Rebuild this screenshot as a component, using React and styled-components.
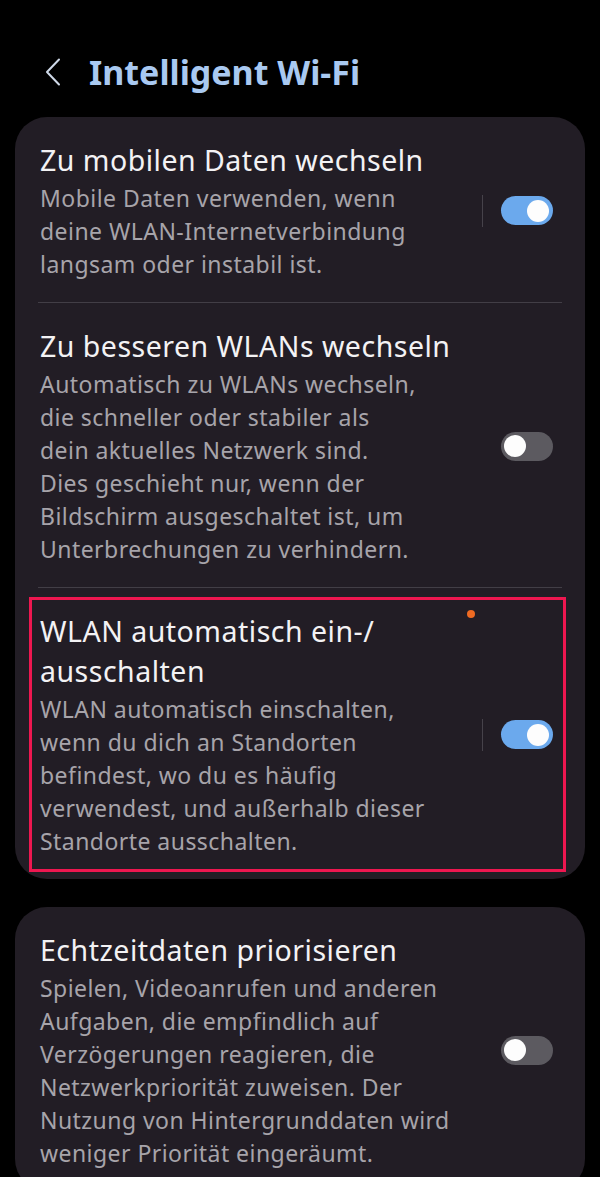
import React from 'react';
import styled, { createGlobalStyle } from 'styled-components';

const Global = createGlobalStyle`
  html, body {
    margin: 0;
    padding: 0;
    background: #000;
  }
  body {
    font-family: "Noto Sans", Roboto, sans-serif;
    -webkit-font-smoothing: antialiased;
  }
`;

const Page = styled.div`
  width: 600px;
  min-height: 1177px;
  background: #000;
  padding: 0 15px;
  box-sizing: border-box;
  overflow: hidden;
`;

const Header = styled.div`
  display: flex;
  align-items: center;
  height: 44px;
  padding-top: 50px;
  margin-bottom: 23px;
`;

const Back = styled.button`
  display: flex;
  align-items: center;
  justify-content: center;
  width: 24px;
  height: 44px;
  margin-left: 26px;
  margin-right: 24px;
  padding: 0;
  background: none;
  border: 0;
`;

const Title = styled.h1`
  margin: 0;
  font-size: 34px;
  font-weight: 700;
  color: #a9c9f1;
`;

const Card = styled.div`
  background: #221d25;
  border-radius: 32px;
  padding: 0 23px;
  margin-bottom: 28px;
`;

const Item = styled.div`
  position: relative;
  display: flex;
  align-items: center;
  padding: 23px 0 21px;
  border-top: ${p => (p.$first ? '0' : '1.5px solid #423e46')};

  ${p =>
    p.$highlight &&
    `
    &::after {
      content: '';
      position: absolute;
      left: -9px;
      right: -4px;
      top: 9px;
      bottom: 7px;
      border: 3px solid #ee1750;
      pointer-events: none;
    }
  `}
`;

const TextCol = styled.div`
  flex: 1;
  padding-left: 2px;
  padding-right: 10px;
`;

const ItemTitle = styled.div`
  font-size: 28.5px;
  line-height: 40px;
  letter-spacing: 0.5px;
  color: #f3f2f4;
  margin-bottom: 2px;
  white-space: nowrap;
`;

const Desc = styled.div`
  font-size: 23px;
  line-height: 33px;
  letter-spacing: 0.45px;
  color: #a7a4aa;
  white-space: nowrap;
`;

const ToggleWrap = styled.div`
  display: flex;
  align-items: center;
  gap: 18px;
`;

const Separator = styled.div`
  width: 1.5px;
  height: 32px;
  background: ${p => (p.$show ? '#46424a' : 'transparent')};
`;

const Track = styled.div`
  position: relative;
  width: 52px;
  height: 29px;
  border-radius: 15px;
  margin-right: 9px;
  background: ${p => (p.$on ? '#6ba9ed' : '#5c5a60')};
`;

const Knob = styled.div`
  position: absolute;
  top: 3.5px;
  left: ${p => (p.$on ? '26px' : '3px')};
  width: 22px;
  height: 22px;
  border-radius: 50%;
  background: #fdfdfd;
`;

const Dot = styled.div`
  position: absolute;
  top: 22px;
  left: 429px;
  width: 8px;
  height: 8px;
  border-radius: 50%;
  background: #ee6a22;
`;

const Toggle = ({ on, sep }) => (
  <ToggleWrap>
    <Separator $show={sep} />
    <Track $on={on}>
      <Knob $on={on} />
    </Track>
  </ToggleWrap>
);

const Setting = ({ title, desc, on, sep, first, highlight, dot }) => (
  <Item $first={first} $highlight={highlight}>
    {dot && <Dot />}
    <TextCol>
      <ItemTitle>{title}</ItemTitle>
      <Desc>{desc}</Desc>
    </TextCol>
    <Toggle on={on} sep={sep} />
  </Item>
);

export default function App() {
  return (
    <Page>
      <Global />
      <Header>
        <Back aria-label="Zurück">
          <svg width="18" height="28" viewBox="0 0 18 28" fill="none">
            <path d="M15 1.5L3 14l12 12.5" stroke="#cfd9e8" strokeWidth="2" strokeLinecap="round" strokeLinejoin="round" />
          </svg>
        </Back>
        <Title>Intelligent Wi-Fi</Title>
      </Header>

      <Card>
        <Setting
          first
          title="Zu mobilen Daten wechseln"
          desc={<>Mobile Daten verwenden, wenn<br />deine WLAN-Internetverbindung<br />langsam oder instabil ist.</>}
          on
          sep
        />
        <Setting
          title="Zu besseren WLANs wechseln"
          desc={<>Automatisch zu WLANs wechseln,<br />die schneller oder stabiler als<br />dein aktuelles Netzwerk sind.<br />Dies geschieht nur, wenn der<br />Bildschirm ausgeschaltet ist, um<br />Unterbrechungen zu verhindern.</>}
        />
        <Setting
          highlight
          dot
          title={<>WLAN automatisch ein-/<br />ausschalten</>}
          desc={<>WLAN automatisch einschalten,<br />wenn du dich an Standorten<br />befindest, wo du es häufig<br />verwendest, und außerhalb dieser<br />Standorte ausschalten.</>}
          on
          sep
        />
      </Card>

      <Card>
        <Setting
          first
          title="Echtzeitdaten priorisieren"
          desc={<>Spielen, Videoanrufen und anderen<br />Aufgaben, die empfindlich auf<br />Verzögerungen reagieren, die<br />Netzwerkpriorität zuweisen. Der<br />Nutzung von Hintergrunddaten wird<br />weniger Priorität eingeräumt.</>}
        />
      </Card>
    </Page>
  );
}
